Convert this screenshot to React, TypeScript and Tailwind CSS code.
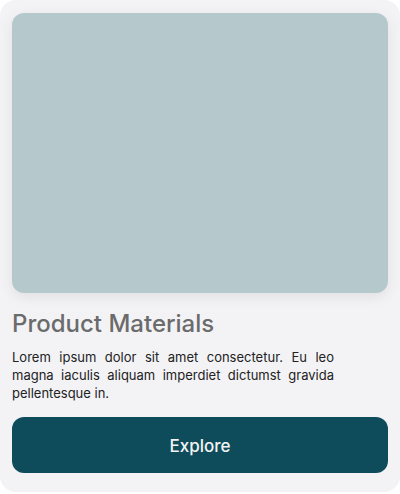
export default function App() {
  return (
    <div className="w-[400px] h-[494px] bg-white" style={{ fontFamily: 'Inter, "Noto Sans", sans-serif' }}>
      <div className="h-[492px] rounded-2xl bg-[#f3f3f6] px-3 pt-[13px]">
        <div className="h-[280px] rounded-xl bg-[#b5c9cd] shadow-[0_4px_14px_rgba(0,0,0,0.08)]"></div>
        <h2 className="mt-[16px] text-[24px] leading-[30px] font-medium text-[#6b6b6b] tracking-[0px]">
          Product Materials
        </h2>
        <p className="mt-[9px] w-[322px] text-[13px] leading-[18px] text-[#222] text-justify">
          Lorem ipsum dolor sit amet consectetur. Eu leo magna iaculis aliquam imperdiet dictumst gravida pellentesque in.
        </p>
        <button className="mt-[15px] w-full h-[56px] rounded-xl bg-[#0f4c5b] pt-[3px] text-[17px] font-medium text-[#f3f3f3]">
          Explore
        </button>
      </div>
    </div>
  )
}
